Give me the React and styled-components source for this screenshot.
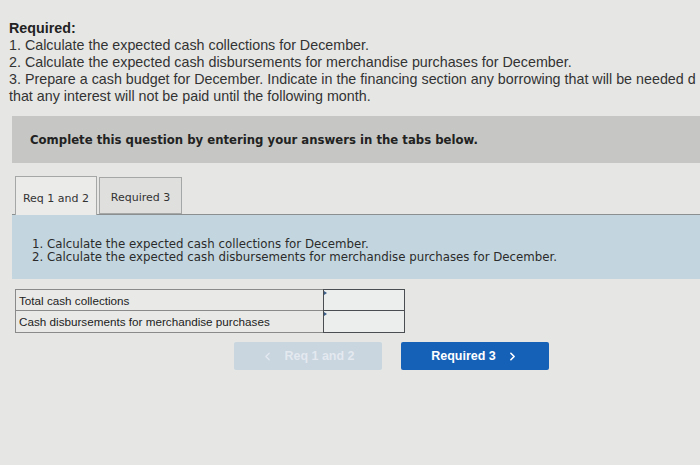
import { createGlobalStyle, styled } from "styled-components";
import { ChevronLeft, ChevronRight } from "lucide-react";

const GlobalStyle = createGlobalStyle`
    html, body {
        margin:0;
        padding:0;
        background:#e6e7e5;
        width:700px;
        height:465px;
        overflow:hidden;
    }
`

const Page = styled.div`
    width:700px;
    height:465px;
    background:#e6e7e5;
    display:flex;
    flex-direction:column;
    overflow:hidden;
`

const Instructions = styled.div`
    padding:20px 0 0 9px;
    font-family:"Liberation Sans", Arial, sans-serif;
    font-size:14.3px;
    line-height:17px;
    color:#333;
    white-space:nowrap;
    overflow:hidden;
`

const Heading = styled.div`
    font-weight:700;
    color:#222;
`

const Banner = styled.div`
    margin:11px 0 0 12px;
    height:47px;
    background:#c6c7c4;
    display:flex;
    align-items:center;
    padding-left:18px;
    font-family:"DejaVu Sans", Verdana, sans-serif;
    font-weight:700;
    font-size:11.7px;
    color:#222;
`

const TabBar = styled.div`
    margin:13px 0 0 12px;
    padding-left:3px;
    display:flex;
    align-items:flex-end;
    gap:2px;
    border-bottom:1px solid #8c8f90;
    height:38px;
`

const Tab = styled.div`
    width:${p => p.$active ? "82px" : "83px"};
    height:${p => p.$active ? "39px" : "37px"};
    margin-bottom:${p => p.$active ? "-1px" : "0"};
    padding-top:${p => p.$active ? "4px" : "3px"};
    box-sizing:border-box;
    border:1px solid #a5a7a6;
    border-bottom:${p => p.$active ? "none" : "1px solid #a5a7a6"};
    background:${p => p.$active ? "#ebebea" : "#dfe0de"};
    display:flex;
    align-items:center;
    justify-content:center;
    font-family:"DejaVu Sans", Verdana, sans-serif;
    font-size:11px;
    color:#333;
`

const Prompt = styled.div`
    margin-left:12px;
    height:64px;
    background:#c3d6df;
    padding:23px 0 0 20px;
    box-sizing:border-box;
    font-family:"DejaVu Sans", Verdana, sans-serif;
    font-size:11.8px;
    line-height:13px;
    color:#2b2b2b;
`

const Table = styled.div`
    margin:10px 0 0 15px;
    width:390px;
    display:grid;
    grid-template-columns:308px 82px;
`

const Label = styled.div`
    height:22px;
    box-sizing:border-box;
    border:1px solid #8a8a8a;
    border-top:${p => p.$first ? "1px solid #8a8a8a" : "none"};
    border-right:none;
    display:flex;
    align-items:center;
    padding-left:3px;
    font-family:"Liberation Sans", Arial, sans-serif;
    font-size:11.7px;
    color:#222;
    background:#e9eae8;
`

const Input = styled.div`
    height:22px;
    box-sizing:border-box;
    border:1.5px solid #4a4d52;
    border-top:${p => p.$first ? "1.5px solid #4a4d52" : "none"};
    background:#eceded;
    position:relative;
    &::before {
        content:"";
        position:absolute;
        left:0;
        top:1px;
        border-left:3px solid #3c5f8a;
        border-top:2px solid transparent;
        border-bottom:2px solid transparent;
    }
`

const Nav = styled.div`
    margin-top:9px;
    padding-left:234px;
    display:flex;
    gap:19px;
`

const NavButton = styled.div`
    width:148px;
    height:28px;
    display:flex;
    align-items:center;
    justify-content:center;
    gap:10px;
    border-radius:2px;
    background:${p => p.$disabled ? "#c9d5df" : "#1661b8"};
    color:${p => p.$disabled ? "#e3e9ef" : "#ffffff"};
    font-family:"Liberation Sans", Arial, sans-serif;
    font-weight:700;
    font-size:12.5px;
`

const App = () => {
    return (
        <Page>
            <GlobalStyle />
            <Instructions>
                <Heading>Required:</Heading>
                <div>1. Calculate the expected cash collections for December.</div>
                <div>2. Calculate the expected cash disbursements for merchandise purchases for December.</div>
                <div>3. Prepare a cash budget for December. Indicate in the financing section any borrowing that will be needed d</div>
                <div>that any interest will not be paid until the following month.</div>
            </Instructions>
            <Banner>Complete this question by entering your answers in the tabs below.</Banner>
            <TabBar>
                <Tab $active>Req 1 and 2</Tab>
                <Tab>Required 3</Tab>
            </TabBar>
            <Prompt>
                <div>1. Calculate the expected cash collections for December.</div>
                <div>2. Calculate the expected cash disbursements for merchandise purchases for December.</div>
            </Prompt>
            <Table>
                <Label $first>Total cash collections</Label>
                <Input $first />
                <Label>Cash disbursements for merchandise purchases</Label>
                <Input />
            </Table>
            <Nav>
                <NavButton $disabled>
                    <ChevronLeft size={13} strokeWidth={2.5} />
                    <span>Req 1 and 2</span>
                </NavButton>
                <NavButton>
                    <span>Required 3</span>
                    <ChevronRight size={13} strokeWidth={3} />
                </NavButton>
            </Nav>
        </Page>
    )
}

export default App;
